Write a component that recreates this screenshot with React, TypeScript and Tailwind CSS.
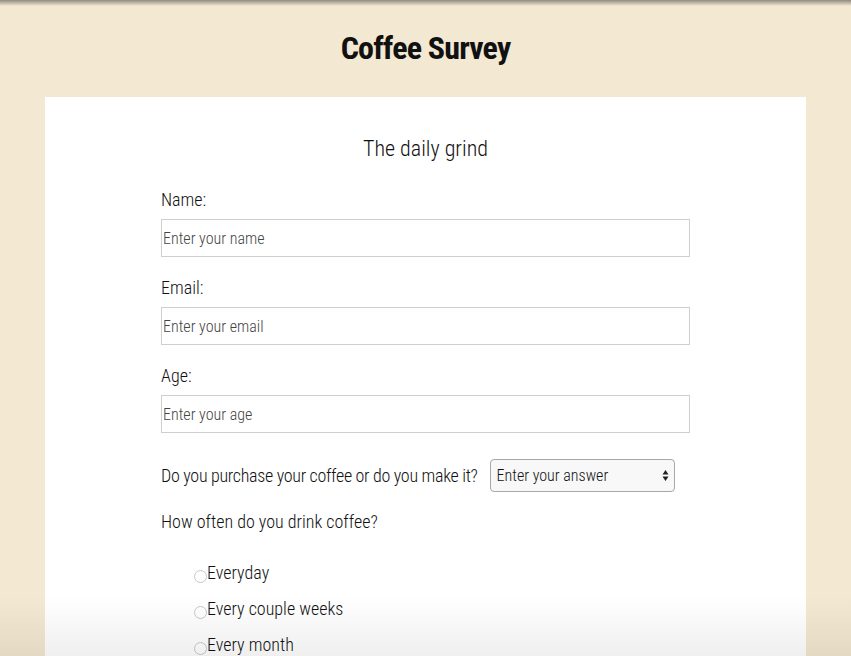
import React from 'react';

const font = { fontFamily: '"Roboto Condensed", "Liberation Sans Narrow", "Liberation Sans", Arial, sans-serif' };

function TextField({ label, placeholder }: { label: string; placeholder: string }) {
  return (
    <div className="mb-[20px]">
      <label className="block text-[18px] leading-[22px] font-light text-[#111] mb-[8px]">{label}</label>
      <input
        type="text"
        placeholder={placeholder}
        className="block w-full h-[38px] border border-[#cfcfcf] bg-white px-[1px] text-[16px] font-light placeholder:text-[#444] outline-none"
        style={font}
      />
    </div>
  );
}

export default function App() {
  const options = ['Everyday', 'Every couple weeks', 'Every month'];
  return (
    <div className="relative w-[851px] h-[656px] overflow-hidden bg-[#f3e8d1]" style={font}>
      <div className="absolute inset-x-0 top-0 h-[6px] bg-gradient-to-b from-[#8f8a80] to-transparent" />
      <h1 className="pt-[28px] pb-[29px] text-center text-[32px] leading-[40px] font-bold tracking-[-0.8px] text-[#111]">Coffee Survey</h1>
      <div className="mx-[45px] bg-white h-[600px] pt-[38px]">
        <h2 className="text-center text-[22px] leading-[28px] font-light text-[#111] mb-[26px]">The daily grind</h2>
        <form className="mx-auto w-[529px]">
          <TextField label="Name:" placeholder="Enter your name" />
          <TextField label="Email:" placeholder="Enter your email" />
          <TextField label="Age:" placeholder="Enter your age" />
          <div className="flex items-center gap-[12px] mt-[26px]">
            <span className="text-[18px] font-light tracking-[-0.3px] text-[#111] whitespace-nowrap">Do you purchase your coffee or do you make it?</span>
            <div className="relative w-[185px] h-[33px] rounded-[4px] border border-[#a8a8a8] bg-[#f8f8f8] flex items-center px-[6px]">
              <span className="text-[16px] font-light text-[#111]">Enter your answer</span>
              <svg className="absolute right-[5px] top-[9px]" width="7" height="13" viewBox="0 0 7 13">
                <path d="M3.5 1 L6.5 5.5 H0.5 Z M3.5 12 L6.5 7.5 H0.5 Z" fill="#222" />
              </svg>
            </div>
          </div>
          <p className="mt-[18px] text-[18px] leading-[24px] font-light text-[#111]">How often do you drink coffee?</p>
          <div className="mt-[27px] ml-[33px] flex flex-col gap-[12px]">
            {options.map((o) => (
              <label key={o} className="flex items-end text-[18px] leading-[24px] font-light text-[#111]">
                <span className="w-[13px] h-[13px] rounded-full border border-[#c8c8c8] mb-[2px]" />
                {o}
              </label>
            ))}
          </div>
        </form>
      </div>
      <div className="absolute inset-x-0 bottom-0 h-[60px] bg-gradient-to-b from-transparent to-[#00000010] pointer-events-none" />
    </div>
  );
}
